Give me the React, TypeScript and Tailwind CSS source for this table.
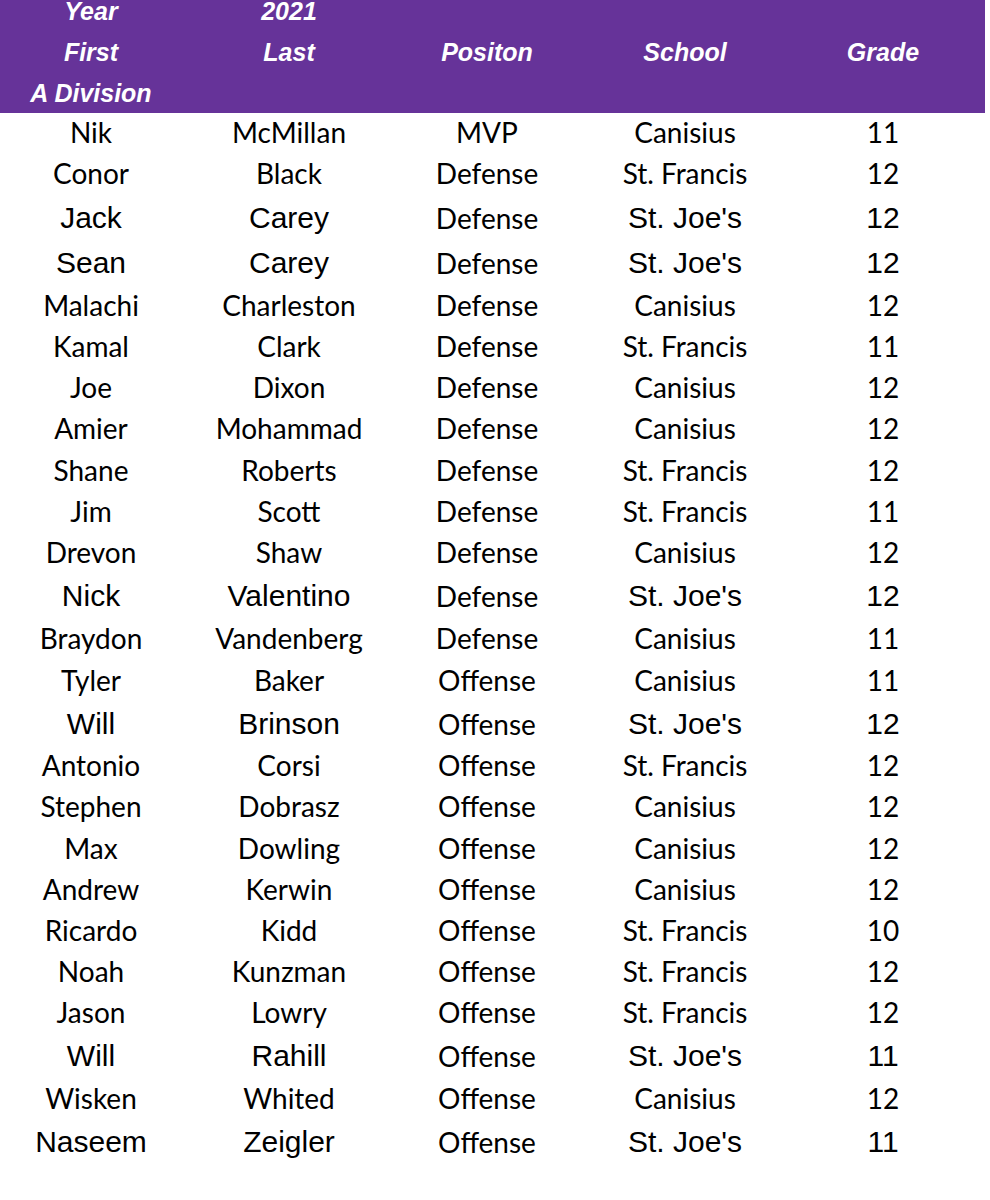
const CALIBRI = "font-['Lato','Liberation_Sans',sans-serif] text-[28px]";
const ARIAL = "font-['Liberation_Sans','Arial',sans-serif] text-[30px]";

type Row = { first: string; last: string; pos: string; school: string; grade: string; arial?: boolean; h: number };

const ROWS: Row[] = [
  { first: "Nik", last: "McMillan", pos: "MVP", school: "Canisius", grade: "11", h: 40 },
  { first: "Conor", last: "Black", pos: "Defense", school: "St. Francis", grade: "12", h: 44 },
  { first: "Jack", last: "Carey", pos: "Defense", school: "St. Joe's", grade: "12", arial: true, h: 45 },
  { first: "Sean", last: "Carey", pos: "Defense", school: "St. Joe's", grade: "12", arial: true, h: 44 },
  { first: "Malachi", last: "Charleston", pos: "Defense", school: "Canisius", grade: "12", h: 41 },
  { first: "Kamal", last: "Clark", pos: "Defense", school: "St. Francis", grade: "11", h: 41 },
  { first: "Joe", last: "Dixon", pos: "Defense", school: "Canisius", grade: "12", h: 41 },
  { first: "Amier", last: "Mohammad", pos: "Defense", school: "Canisius", grade: "12", h: 42 },
  { first: "Shane", last: "Roberts", pos: "Defense", school: "St. Francis", grade: "12", h: 41 },
  { first: "Jim", last: "Scott", pos: "Defense", school: "St. Francis", grade: "11", h: 41 },
  { first: "Drevon", last: "Shaw", pos: "Defense", school: "Canisius", grade: "12", h: 42 },
  { first: "Nick", last: "Valentino", pos: "Defense", school: "St. Joe's", grade: "12", arial: true, h: 44 },
  { first: "Braydon", last: "Vandenberg", pos: "Defense", school: "Canisius", grade: "11", h: 42 },
  { first: "Tyler", last: "Baker", pos: "Offense", school: "Canisius", grade: "11", h: 42 },
  { first: "Will", last: "Brinson", pos: "Offense", school: "St. Joe's", grade: "12", arial: true, h: 43 },
  { first: "Antonio", last: "Corsi", pos: "Offense", school: "St. Francis", grade: "12", h: 41 },
  { first: "Stephen", last: "Dobrasz", pos: "Offense", school: "Canisius", grade: "12", h: 42 },
  { first: "Max", last: "Dowling", pos: "Offense", school: "Canisius", grade: "12", h: 41 },
  { first: "Andrew", last: "Kerwin", pos: "Offense", school: "Canisius", grade: "12", h: 41 },
  { first: "Ricardo", last: "Kidd", pos: "Offense", school: "St. Francis", grade: "10", h: 41 },
  { first: "Noah", last: "Kunzman", pos: "Offense", school: "St. Francis", grade: "12", h: 41 },
  { first: "Jason", last: "Lowry", pos: "Offense", school: "St. Francis", grade: "12", h: 42 },
  { first: "Will", last: "Rahill", pos: "Offense", school: "St. Joe's", grade: "11", arial: true, h: 43 },
  { first: "Wisken", last: "Whited", pos: "Offense", school: "Canisius", grade: "12", h: 43 },
  { first: "Naseem", last: "Zeigler", pos: "Offense", school: "St. Joe's", grade: "11", arial: true, h: 44 },
];

const HEADER = [
  ["Year", "First", "A Division"],
  ["2021", "Last", ""],
  ["", "Positon", ""],
  ["", "School", ""],
  ["", "Grade", ""],
];

export default function App() {
  return (
    <div className="w-[990px] min-h-[1200px] bg-white text-black">
      <div className="h-[113px] w-[985px] overflow-hidden bg-[#663399]">
        <div className="-ml-2 -mt-[9px] grid w-[990px] grid-cols-5 font-['Liberation_Sans','Arial',sans-serif] text-[25px] font-bold italic text-white">
          {HEADER.map((col, i) => (
            <div key={i} className="flex flex-col items-center">
              {col.map((line, j) => (
                <div key={j} className="h-[41px] leading-[41px] whitespace-nowrap">
                  {line}
                </div>
              ))}
            </div>
          ))}
        </div>
      </div>
      <div className="-ml-2 -mt-[2px] w-[990px]">
        {ROWS.map((r, i) => {
          const f = r.arial ? ARIAL : CALIBRI;
          return (
            <div key={i} className="grid grid-cols-5 items-center text-center" style={{ height: r.h }}>
              <div className={f}>{r.first}</div>
              <div className={f}>{r.last}</div>
              <div className={CALIBRI}>{r.pos}</div>
              <div className={f}>{r.school}</div>
              <div className={f}>{r.grade}</div>
            </div>
          );
        })}
      </div>
    </div>
  );
}
